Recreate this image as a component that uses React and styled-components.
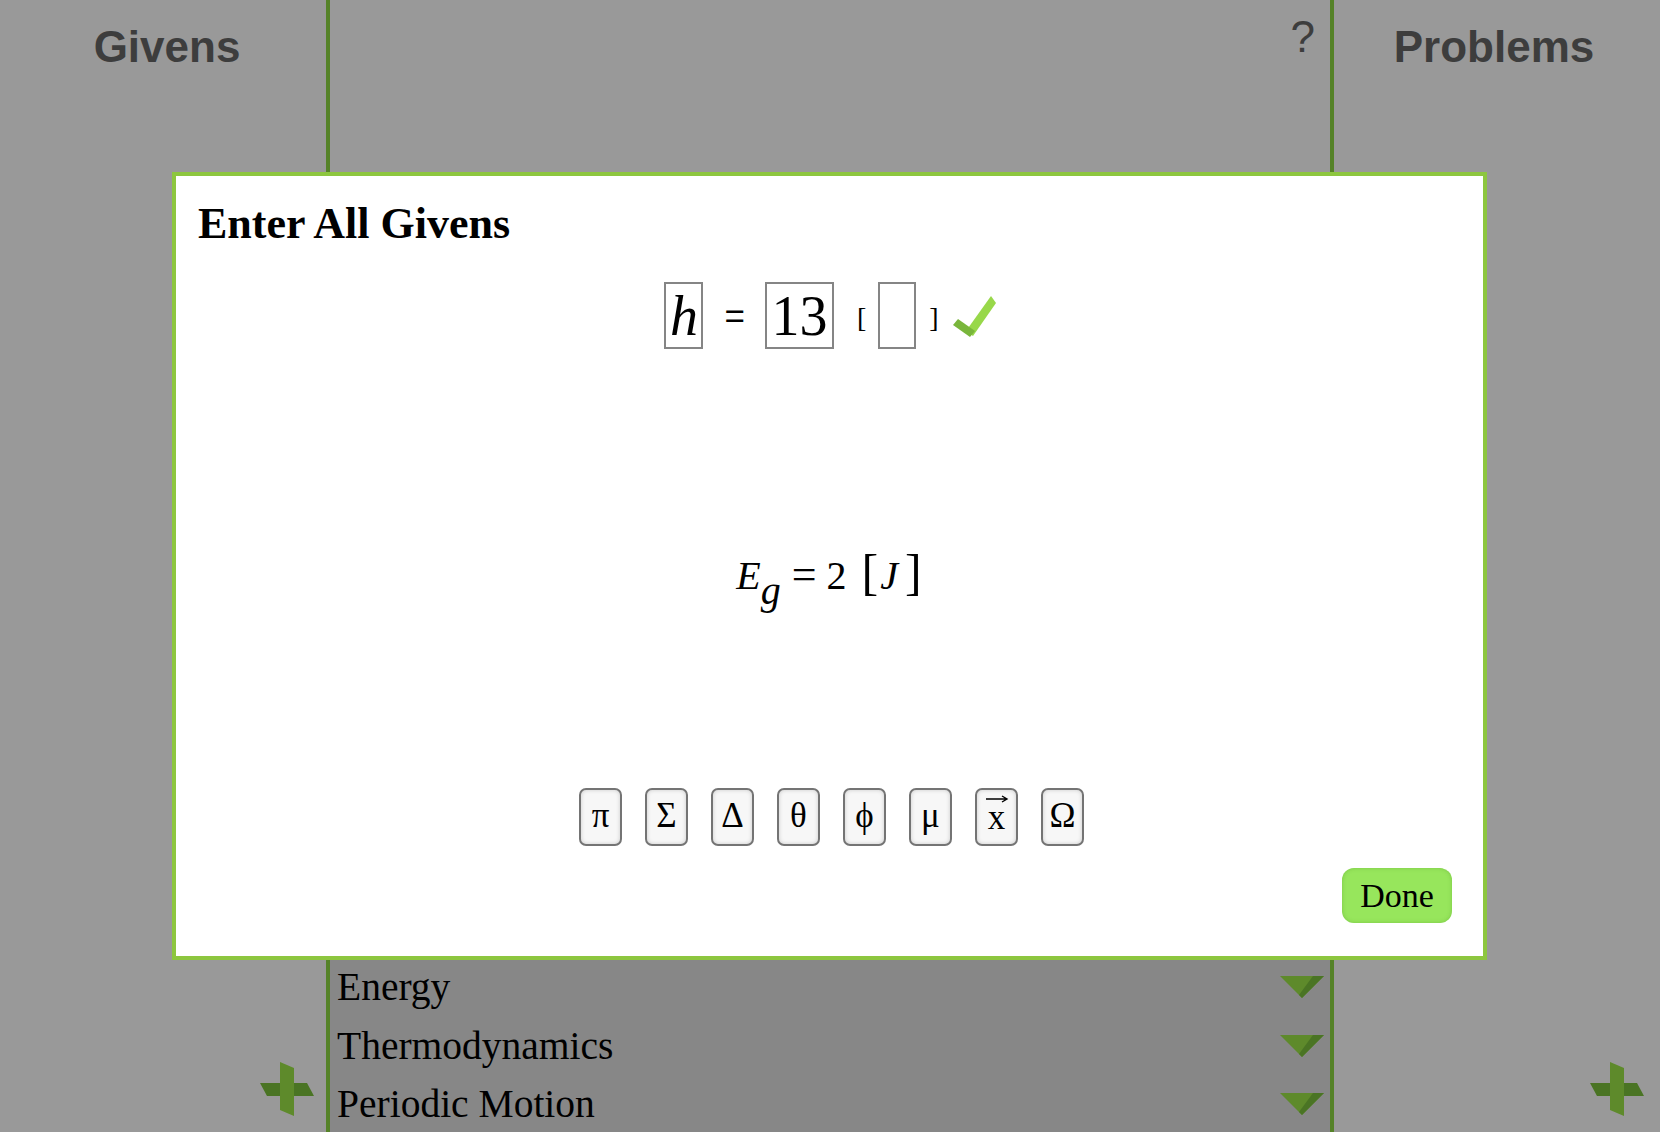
import React from 'react';
import styled, { createGlobalStyle } from 'styled-components';

const GlobalStyle = createGlobalStyle`
  html, body {
    margin: 0;
    padding: 0;
    height: 100%;
    overflow: hidden;
    background: #999999;
  }

  * {
    box-sizing: border-box;
  }
`;

const SERIF = `"Liberation Serif", "Times New Roman", serif`;
const SANS = `"Liberation Sans", Arial, sans-serif`;

const Shell = styled.div`
  display: grid;
  grid-template-columns: 326px 1008px 326px;
  height: 100vh;
  background: #999999;
`;

const SideColumn = styled.section`
  display: flex;
  flex-direction: column;
  height: 100vh;
`;

const ColumnTitle = styled.h1`
  margin: 0;
  padding: 22px ${({ $shift }) => ($shift < 0 ? -$shift : 0)}px 0 ${({ $shift }) => ($shift > 0 ? $shift : 0)}px;
  color: #3d3d3d;
  font-family: ${SANS};
  font-size: 44px;
  font-weight: 700;
  line-height: 50px;
  text-align: center;
`;

const AddButton = styled.button`
  display: block;
  align-self: flex-end;
  margin: auto ${({ $right }) => $right}px 16px 0;
  padding: 0;
  width: 54px;
  height: 54px;
  border: 0;
  background: none;
  cursor: pointer;
`;

const MainColumn = styled.main`
  display: flex;
  flex-direction: column;
  height: 100vh;
  overflow: hidden;
  border-left: 4px solid #558228;
  border-right: 4px solid #558228;
`;

const Workspace = styled.div`
  display: flex;
  justify-content: flex-end;
  flex: 0 0 958px;
  padding: 12px 15px 0 0;
`;

const HelpLink = styled.span`
  color: #3d3d3d;
  font-family: ${SANS};
  font-size: 44px;
  line-height: 50px;
  cursor: pointer;
`;

const TopicList = styled.ul`
  margin: 0;
  padding: 0;
  list-style: none;
  background: #878787;
  flex: 1 0 auto;
`;

const TopicRow = styled.li`
  display: flex;
  align-items: center;
  justify-content: space-between;
  height: 58.5px;
  padding: 0 6px 0 7px;
  color: #000;
  font-family: ${SERIF};
  font-size: 39.5px;
  line-height: 58px;
`;

const Overlay = styled.div`
  position: fixed;
  left: 172px;
  top: 172px;
  display: flex;
  flex-direction: column;
  width: 1315px;
  height: 788px;
  padding: 24px 31px 33px 19px;
  border: 4px solid #8dc63f;
  background: #ffffff;
`;

const DialogTitle = styled.h2`
  margin: 0;
  padding-left: 3px;
  color: #000;
  font-family: ${SERIF};
  font-size: 44px;
  font-weight: 700;
  line-height: 48px;
`;

const EntryRow = styled.div`
  display: flex;
  align-items: center;
  justify-content: center;
  height: 67px;
  margin-top: 34px;
  padding-left: 14px;
`;

const MathBox = styled.span`
  display: inline-flex;
  align-items: center;
  justify-content: center;
  width: ${({ $w }) => $w}px;
  height: 67px;
  border: 2px solid #858585;
  color: #000;
  font-family: ${SERIF};
  font-size: 56px;
  font-style: ${({ $italic }) => ($italic ? 'italic' : 'normal')};
  line-height: 1;
`;

const Equals = styled.span`
  margin: 0 20px 0 21px;
  font-family: ${SANS};
  font-size: 35px;
  line-height: 1;
`;

const Bracket = styled.span`
  margin: ${({ $m }) => $m};
  font-family: ${SERIF};
  font-size: 28px;
  line-height: 1;
  padding-top: 4px;
`;

const Check = styled.svg`
  display: block;
  margin-left: 14px;
  margin-top: 4px;
`;

const FormulaArea = styled.div`
  display: flex;
  flex: 1;
  align-items: center;
  justify-content: center;
  padding-top: 7px;
  padding-left: 11px;
`;

const Formula = styled.div`
  display: flex;
  align-items: baseline;
  color: #000;
  font-family: ${SERIF};
  font-size: 40px;
  line-height: 1;
  white-space: nowrap;
`;

const Term = styled.span`
  margin-left: ${({ $ml = 0 }) => $ml}px;
  font-size: ${({ $size = 40 }) => $size}px;
  font-style: ${({ $italic }) => ($italic ? 'italic' : 'normal')};
  ${({ $sub }) => $sub && 'position: relative; top: 15px;'}
`;

const SymbolRow = styled.div`
  display: flex;
  justify-content: center;
  gap: 23px;
  padding-left: 16px;
`;

const SymbolKey = styled.button`
  display: flex;
  flex-direction: column;
  align-items: center;
  justify-content: center;
  width: 43px;
  height: 58px;
  padding: 0 0 4px;
  border: 2px solid #747474;
  border-radius: 7px;
  background: #f7f7f7;
  box-shadow: inset 0 0 4px rgba(0, 0, 0, 0.18);
  color: #000;
  font-family: ${SERIF};
  font-size: 35px;
  line-height: 1;
  cursor: pointer;

  svg {
    display: block;
    margin-bottom: -3px;
  }
`;

const Footer = styled.div`
  display: flex;
  justify-content: flex-end;
  margin-top: 22px;
`;

const DoneButton = styled.button`
  width: 110px;
  height: 55px;
  padding: 0;
  border: 0;
  border-radius: 12px;
  background: #97e65c;
  box-shadow: inset 0 0 4px rgba(70, 140, 30, 0.35);
  color: #000;
  font-family: ${SERIF};
  font-size: 34px;
  cursor: pointer;
`;

const PlusIcon = () => (
  <svg width="54" height="54" viewBox="0 0 54 54">
    <polygon points="0,21 47,21 54,34 7,34" fill="#4a7424" />
    <polygon points="20,0 34,6 34,54 20,48" fill="#5e8a2b" />
  </svg>
);

const CaretIcon = () => (
  <svg width="44" height="22" viewBox="0 0 44 22">
    <polygon points="0,0 44,0 22,22" fill="#5e8a2b" />
    <polygon points="33,0 44,0 22,22 19,19" fill="#4a7424" />
  </svg>
);

const symbols = ['π', 'Σ', 'Δ', 'θ', 'ϕ', 'μ', 'vec', 'Ω'];
const topics = ['Energy', 'Thermodynamics', 'Periodic Motion'];

const App = () => (
  <>
    <GlobalStyle />
    <Shell>
      <SideColumn>
        <ColumnTitle $shift={8}>Givens</ColumnTitle>
        <AddButton $right={12} aria-label="Add given">
          <PlusIcon />
        </AddButton>
      </SideColumn>

      <MainColumn>
        <Workspace>
          <HelpLink>?</HelpLink>
        </Workspace>
        <TopicList>
          {topics.map(t => (
            <TopicRow key={t}>
              {t}
              <CaretIcon />
            </TopicRow>
          ))}
        </TopicList>
      </MainColumn>

      <SideColumn>
        <ColumnTitle $shift={-6}>Problems</ColumnTitle>
        <AddButton $right={16} aria-label="Add problem">
          <PlusIcon />
        </AddButton>
      </SideColumn>
    </Shell>

    <Overlay role="dialog">
      <DialogTitle>Enter All Givens</DialogTitle>

      <EntryRow>
        <MathBox $w={39} $italic>h</MathBox>
        <Equals>=</Equals>
        <MathBox $w={69}>13</MathBox>
        <Bracket $m="0 12px 0 23px">[</Bracket>
        <MathBox $w={38} />
        <Bracket $m="0 0 0 13px">]</Bracket>
        <Check width="44" height="44" viewBox="0 0 44 44">
          <polygon points="13,35 38,0 43,7 20,40" fill="#98d84a" />
          <polygon points="0,29 5,23 22,35 17,41" fill="#79b63b" />
        </Check>
      </EntryRow>

      <FormulaArea>
        <Formula>
          <Term $italic>E</Term>
          <Term $italic $sub>g</Term>
          <Term $size={44} $ml={11}>=</Term>
          <Term $ml={10}>2</Term>
          <Term $size={50} $ml={15}>[</Term>
          <Term $italic $ml={2}>J</Term>
          <Term $size={50} $ml={7}>]</Term>
        </Formula>
      </FormulaArea>

      <SymbolRow>
        {symbols.map(s => (
          <SymbolKey key={s}>
            {s === 'vec' ? (
              <>
                <svg width="24" height="8" viewBox="0 0 24 8">
                  <path d="M1 4 H22 M17 1 L22 4 L17 7" stroke="#000" strokeWidth="1.4" fill="none" />
                </svg>
                <span>x</span>
              </>
            ) : (
              s
            )}
          </SymbolKey>
        ))}
      </SymbolRow>

      <Footer>
        <DoneButton>Done</DoneButton>
      </Footer>
    </Overlay>
  </>
);

export default App;
